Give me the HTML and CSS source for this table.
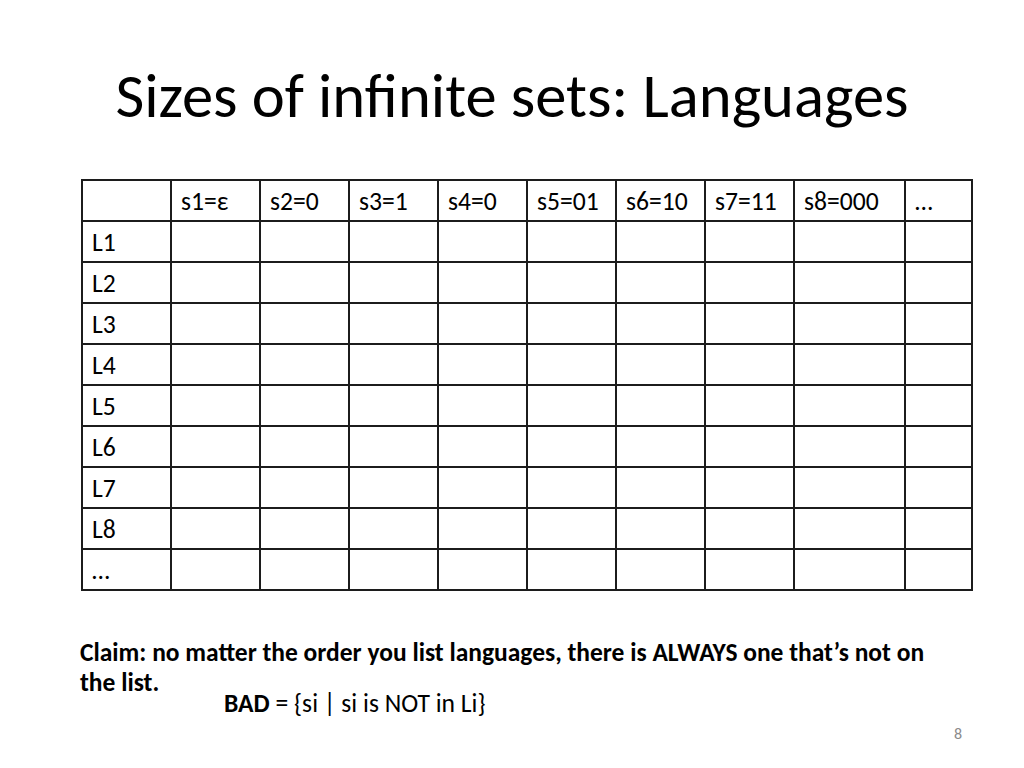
FILE: index.html
```html
<!DOCTYPE html>
<html>
<head>
<meta charset="utf-8">
<link rel="stylesheet" href="styles.css">
</head>
<body>
<div class="slide">
  <h1 class="title">Sizes of infinite sets: Languages</h1>
  <table class="grid">
    <colgroup>
      <col class="c"><col class="c"><col class="c"><col class="c"><col class="c"><col class="c"><col class="c"><col class="c"><col class="wide"><col class="last">
    </colgroup>
    <tr><td></td><td>s1=ε</td><td>s2=0</td><td>s3=1</td><td>s4=0</td><td>s5=01</td><td>s6=10</td><td>s7=11</td><td>s8=000</td><td>…</td></tr>
    <tr><td>L1</td><td></td><td></td><td></td><td></td><td></td><td></td><td></td><td></td><td></td></tr>
    <tr><td>L2</td><td></td><td></td><td></td><td></td><td></td><td></td><td></td><td></td><td></td></tr>
    <tr><td>L3</td><td></td><td></td><td></td><td></td><td></td><td></td><td></td><td></td><td></td></tr>
    <tr><td>L4</td><td></td><td></td><td></td><td></td><td></td><td></td><td></td><td></td><td></td></tr>
    <tr><td>L5</td><td></td><td></td><td></td><td></td><td></td><td></td><td></td><td></td><td></td></tr>
    <tr><td>L6</td><td></td><td></td><td></td><td></td><td></td><td></td><td></td><td></td><td></td></tr>
    <tr><td>L7</td><td></td><td></td><td></td><td></td><td></td><td></td><td></td><td></td><td></td></tr>
    <tr><td>L8</td><td></td><td></td><td></td><td></td><td></td><td></td><td></td><td></td><td></td></tr>
    <tr><td>…</td><td></td><td></td><td></td><td></td><td></td><td></td><td></td><td></td><td></td></tr>
  </table>
  <p class="claim">Claim: no matter the order you list languages, there is ALWAYS one that’s not on the list.</p>
  <p class="bad"><b>BAD</b> = {si | si is NOT in Li}</p>
  <div class="pagenum">8</div>
</div>
</body>
</html>
```
FILE: styles.css
```css
html, body {
  margin: 0;
  padding: 0;
  background: #fff;
}
.slide {
  width: 1024px;
  height: 768px;
  position: relative;
  font-family: Carlito, Lato, "Liberation Sans", sans-serif;
  color: #000;
  overflow: hidden;
}
.title {
  margin: 0 0 46px 0;
  padding-top: 58px;
  text-align: center;
  font-weight: normal;
  font-size: 62.6px;
  line-height: 75px;
}
.grid {
  margin-left: 81px;
  border-collapse: collapse;
  table-layout: fixed;
  width: 892px;
  font-size: 25.6px;
}
.grid col.c { width: 89px; }
.grid col.wide { width: 111px; }
.grid col.last { width: 67px; }
.grid td {
  border: 2px solid #1c1c1c;
  height: 36px;
  padding: 3px 0 0 9px;
  vertical-align: middle;
  white-space: nowrap;
  line-height: 30px;
}
.claim {
  margin: 47px 0 0 80px;
  width: 870px;
  font-weight: bold;
  font-size: 25.5px;
  line-height: 30px;
}
.bad {
  margin: -7px 0 0 224px;
  font-size: 25.6px;
  line-height: 26px;
}
.pagenum {
  position: absolute;
  left: 954px;
  top: 724px;
  font-size: 16px;
  color: #8a8a8a;
}
```
